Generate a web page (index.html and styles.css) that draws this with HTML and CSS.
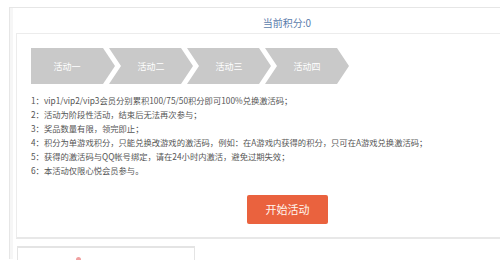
FILE: index.html
```html
<!DOCTYPE html>
<html lang="zh-CN">
<head>
  <meta charset="UTF-8">
  <title>当前积分</title>
  <link rel="stylesheet" href="styles.css">
</head>
<body>
  <div class="wrap">
    <div class="score">当前积分:0</div>

    <!-- activity panel -->
    <div class="panel">
      <div class="steps">
        <div class="step first">活动一</div>
        <div class="step">活动二</div>
        <div class="step">活动三</div>
        <div class="step">活动四</div>
      </div>
      <ul class="rules">
        <li>1：vip1/vip2/vip3会员分别累积100/75/50积分即可100%兑换激活码；</li>
        <li>2：活动为阶段性活动，结束后无法再次参与；</li>
        <li>3：奖品数量有限，领完即止；</li>
        <li>4：积分为单游戏积分，只能兑换改游戏的激活码，例如：在A游戏内获得的积分，只可在A游戏兑换激活码；</li>
        <li>5：获得的激活码与QQ帐号绑定，请在24小时内激活，避免过期失效；</li>
        <li>6：本活动仅限心悦会员参与。</li>
      </ul>
      <div class="actions">
        <a class="btn-start" href="#">开始活动</a>
      </div>
    </div>

    <div class="next-box">
      <span class="dot"></span>
    </div>
  </div>
</body>
</html>
```

FILE: styles.css
```css
body {
  margin: 0;
  background: #fff;
  font-family: "Noto Sans CJK SC", "Noto Sans", sans-serif;
  overflow: hidden;
  height: 260px;
}
.wrap {
  margin: 7px 0 0 9px;
  border-left: 1px solid #e6e6e6;
  border-top: 1px solid #e6e6e6;
  box-shadow: inset 3px 0 0 #f6f6f6;
  height: 252px;
  box-sizing: border-box;
}
.score {
  padding: 8px 0 3px 64px;
  text-align: center;
  font-size: 10px;
  line-height: 14px;
  color: #5a7cab;
}
.panel {
  margin-left: 6px;
  border-left: 1px solid #ececec;
  border-top: 1px solid #ececec;
  border-bottom: 2px solid #e8e8e8;
  padding: 14px 0 13px 14px;
}
.steps {
  display: flex;
}
.step {
  width: 84px;
  height: 36px;
  margin-left: -6px;
  padding: 0 12px;
  box-sizing: border-box;
  background: #c9c9c9;
  color: #fff;
  font-size: 9px;
  display: flex;
  align-items: center;
  justify-content: center;
  clip-path: polygon(0 0, 72px 0, 84px 50%, 72px 100%, 0 100%, 12px 50%);
}
.step.first {
  margin-left: 0;
  padding: 0 12px 0 0;
  clip-path: polygon(0 0, 72px 0, 84px 50%, 72px 100%, 0 100%);
}
.rules {
  list-style: none;
  margin: 9px 0 0;
  padding: 0;
  font-size: 8.3px;
  line-height: 14px;
  color: #555;
}
.actions {
  text-align: center;
  margin-top: 18px;
  padding-left: 44px;
}
.btn-start {
  display: inline-block;
  width: 81px;
  height: 29px;
  line-height: 29px;
  background: #ea623e;
  border-radius: 2px;
  color: #fff6ee;
  font-size: 11px;
  text-decoration: none;
}
.next-box {
  margin: 7px 0 0 7px;
  width: 176px;
  height: 12px;
  border: 1px solid #e4e4e4;
  border-top-width: 2px;
  border-bottom: none;
  position: relative;
}
.dot {
  position: absolute;
  left: 58px;
  top: 9px;
  width: 5px;
  height: 3px;
  background: #f0a0a0;
  border-radius: 3px 3px 0 0;
}
```
